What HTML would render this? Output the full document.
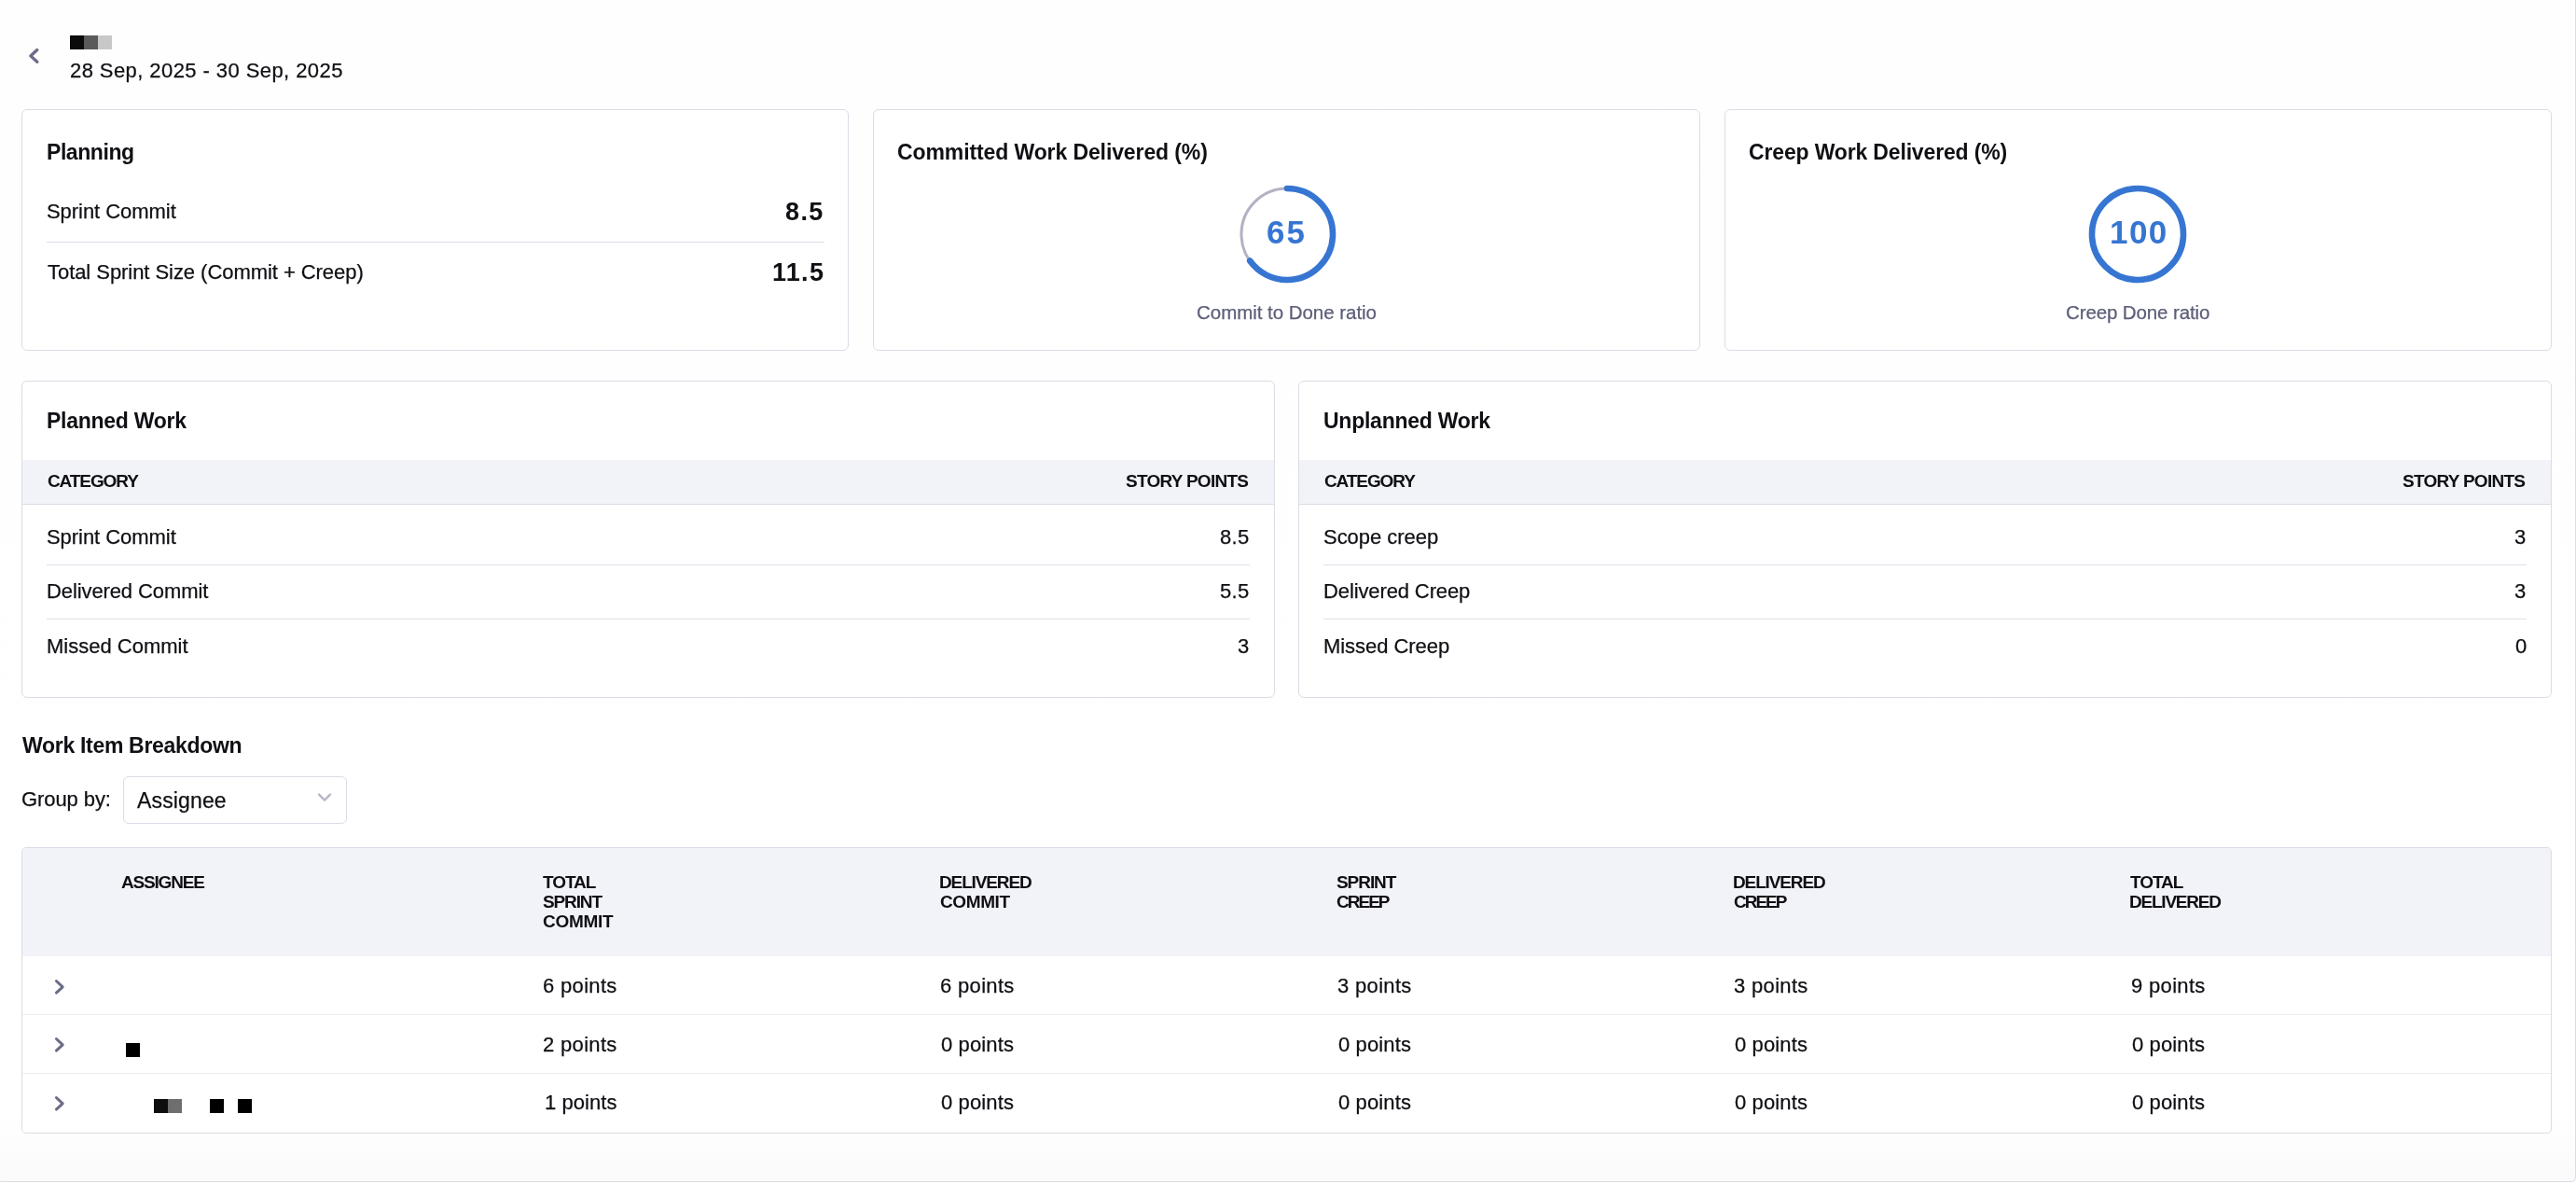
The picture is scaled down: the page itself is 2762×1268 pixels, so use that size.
<!DOCTYPE html>
<html><head><meta charset="utf-8"><title>Sprint Report</title>
<style>
html,body{margin:0;padding:0;width:2762px;height:1268px;overflow:hidden;background:#fefefe;}
body{position:relative;font-family:"Liberation Sans", sans-serif;}
.t{position:absolute;white-space:nowrap;will-change:transform;}
</style></head><body>
<div style="position:absolute;left:-3px;top:-10px;width:2765px;height:1277px;box-sizing:border-box;border-right:1px solid #dcdce6;border-bottom:1px solid #dcdce6;border-left:1px solid #dcdce6;border-bottom-left-radius:5px;border-bottom-right-radius:5px;background:linear-gradient(to bottom,#fefefe 0px,#ffffff 1205px,#fafafb 1277px)"></div>
<svg style="position:absolute;left:0;top:0" width="60" height="90"><path d="M39.8 53.6 L32.8 59.9 L39.8 66.3" fill="none" stroke="#6b6b88" stroke-width="3.3" stroke-linecap="round" stroke-linejoin="round"/></svg>
<div style="position:absolute;left:75px;top:38px;width:15px;height:15px;background:#0b0b0b"></div>
<div style="position:absolute;left:90px;top:38px;width:15px;height:15px;background:#5a5a5a"></div>
<div style="position:absolute;left:105px;top:38px;width:15px;height:15px;background:#c8c8c8"></div>
<div class="t" style="left:75.30px;top:58.88px;font-size:22.00px;line-height:33px;font-weight:400;color:#0f0f14;letter-spacing:0.426px;-webkit-text-stroke:0.25px #0f0f14">28 Sep, 2025 - 30 Sep, 2025</div>
<div style="position:absolute;left:23px;top:117px;width:887px;height:259px;box-sizing:border-box;border:1px solid #dcdce6;border-radius:6px;background:#fff"></div>
<div style="position:absolute;left:936px;top:117px;width:887px;height:259px;box-sizing:border-box;border:1px solid #dcdce6;border-radius:6px;background:#fff"></div>
<div style="position:absolute;left:1849px;top:117px;width:887px;height:259px;box-sizing:border-box;border:1px solid #dcdce6;border-radius:6px;background:#fff"></div>
<div class="t" style="left:50.36px;top:146.03px;font-size:23.00px;line-height:34px;font-weight:700;color:#0f0f14;letter-spacing:-0.429px">Planning</div>
<div class="t" style="left:50.36px;top:209.88px;font-size:22.00px;line-height:33px;font-weight:400;color:#0f0f14;letter-spacing:-0.051px;-webkit-text-stroke:0.25px #0f0f14">Sprint Commit</div>
<div class="t" style="left:842.42px;top:206.64px;font-size:27.00px;line-height:40px;font-weight:700;color:#0f0f14;letter-spacing:1.405px">8.5</div>
<div style="position:absolute;left:50px;top:259px;width:834px;height:1px;background:#dcdce8"></div>
<div class="t" style="left:51.06px;top:274.88px;font-size:22.00px;line-height:33px;font-weight:400;color:#0f0f14;letter-spacing:-0.054px;-webkit-text-stroke:0.25px #0f0f14">Total Sprint Size (Commit + Creep)</div>
<div class="t" style="left:827.86px;top:271.64px;font-size:27.00px;line-height:40px;font-weight:700;color:#0f0f14;letter-spacing:1.281px">11.5</div>
<div class="t" style="left:962.42px;top:146.03px;font-size:23.00px;line-height:34px;font-weight:700;color:#0f0f14;letter-spacing:-0.105px">Committed Work Delivered (%)</div>
<div class="t" style="left:1874.98px;top:146.03px;font-size:23.00px;line-height:34px;font-weight:700;color:#0f0f14;letter-spacing:-0.158px">Creep Work Delivered (%)</div>
<svg style="position:absolute;left:1320.3px;top:190.7px" width="120" height="120"><circle cx="60" cy="60" r="49.0" fill="none" stroke="#b2b2c2" stroke-width="3"/><circle cx="60" cy="60" r="49.0" fill="none" stroke="#3676d2" stroke-width="6.6" stroke-linecap="round" stroke-dasharray="200.12 307.88" transform="rotate(-90 60 60)"/></svg>
<svg style="position:absolute;left:2232px;top:190.8px" width="120" height="120"><circle cx="60" cy="60" r="49.0" fill="none" stroke="#3676d2" stroke-width="6.6"/></svg>
<div class="t" style="left:1358.48px;top:222.87px;font-size:35.00px;line-height:52px;font-weight:700;color:#3676d2;letter-spacing:1.920px">65</div>
<div class="t" style="left:2262.40px;top:222.87px;font-size:35.00px;line-height:52px;font-weight:700;color:#3676d2;letter-spacing:1.430px">100</div>
<div class="t" style="left:1282.86px;top:319.40px;font-size:20.50px;line-height:31px;font-weight:400;color:#5c5e78;letter-spacing:-0.038px;-webkit-text-stroke:0.25px #5c5e78">Commit to Done ratio</div>
<div class="t" style="left:2214.92px;top:319.40px;font-size:20.50px;line-height:31px;font-weight:400;color:#5c5e78;letter-spacing:-0.114px;-webkit-text-stroke:0.25px #5c5e78">Creep Done ratio</div>
<div style="position:absolute;left:23px;top:408px;width:1344px;height:340px;box-sizing:border-box;border:1px solid #dcdce6;border-radius:6px;background:#fff"></div>
<div style="position:absolute;left:1392px;top:408px;width:1344px;height:340px;box-sizing:border-box;border:1px solid #dcdce6;border-radius:6px;background:#fff"></div>
<div class="t" style="left:49.54px;top:434.03px;font-size:23.00px;line-height:34px;font-weight:700;color:#0f0f14;letter-spacing:-0.263px">Planned Work</div>
<div style="position:absolute;left:24px;top:493px;width:1342px;height:47px;background:#f2f3f8"></div>
<div style="position:absolute;left:24px;top:540px;width:1342px;height:1px;background:#dcdce6"></div>
<div class="t" style="left:50.94px;top:502.42px;font-size:19.00px;line-height:28px;font-weight:700;color:#0f0f14;letter-spacing:-1.106px">CATEGORY</div>
<div class="t" style="left:1207.06px;top:502.42px;font-size:19.00px;line-height:28px;font-weight:700;color:#0f0f14;letter-spacing:-0.739px">STORY POINTS</div>
<div class="t" style="left:50.36px;top:558.88px;font-size:22.00px;line-height:33px;font-weight:400;color:#0f0f14;letter-spacing:-0.051px;-webkit-text-stroke:0.25px #0f0f14">Sprint Commit</div>
<div class="t" style="left:1307.92px;top:558.88px;font-size:22.00px;line-height:33px;font-weight:400;color:#0f0f14;letter-spacing:0.380px;-webkit-text-stroke:0.25px #0f0f14">8.5</div>
<div class="t" style="left:50.36px;top:616.88px;font-size:22.00px;line-height:33px;font-weight:400;color:#0f0f14;letter-spacing:-0.103px;-webkit-text-stroke:0.25px #0f0f14">Delivered Commit</div>
<div class="t" style="left:1307.92px;top:616.88px;font-size:22.00px;line-height:33px;font-weight:400;color:#0f0f14;letter-spacing:0.380px;-webkit-text-stroke:0.25px #0f0f14">5.5</div>
<div class="t" style="left:50.36px;top:675.88px;font-size:22.00px;line-height:33px;font-weight:400;color:#0f0f14;letter-spacing:-0.005px;-webkit-text-stroke:0.25px #0f0f14">Missed Commit</div>
<div class="t" style="left:1327.30px;top:675.88px;font-size:22.00px;line-height:33px;font-weight:400;color:#0f0f14;letter-spacing:0.000px;-webkit-text-stroke:0.25px #0f0f14">3</div>
<div style="position:absolute;left:50px;top:605px;width:1290px;height:1px;background:#e0e0e9"></div>
<div style="position:absolute;left:50px;top:663px;width:1290px;height:1px;background:#e0e0e9"></div>
<div class="t" style="left:1418.54px;top:434.03px;font-size:23.00px;line-height:34px;font-weight:700;color:#0f0f14;letter-spacing:-0.246px">Unplanned Work</div>
<div style="position:absolute;left:1393px;top:493px;width:1342px;height:47px;background:#f2f3f8"></div>
<div style="position:absolute;left:1393px;top:540px;width:1342px;height:1px;background:#dcdce6"></div>
<div class="t" style="left:1419.94px;top:502.42px;font-size:19.00px;line-height:28px;font-weight:700;color:#0f0f14;letter-spacing:-1.106px">CATEGORY</div>
<div class="t" style="left:2576.06px;top:502.42px;font-size:19.00px;line-height:28px;font-weight:700;color:#0f0f14;letter-spacing:-0.739px">STORY POINTS</div>
<div class="t" style="left:1419.36px;top:558.88px;font-size:22.00px;line-height:33px;font-weight:400;color:#0f0f14;letter-spacing:-0.025px;-webkit-text-stroke:0.25px #0f0f14">Scope creep</div>
<div class="t" style="left:2695.98px;top:558.88px;font-size:22.00px;line-height:33px;font-weight:400;color:#0f0f14;letter-spacing:0.000px;-webkit-text-stroke:0.25px #0f0f14">3</div>
<div class="t" style="left:1419.36px;top:616.88px;font-size:22.00px;line-height:33px;font-weight:400;color:#0f0f14;letter-spacing:-0.117px;-webkit-text-stroke:0.25px #0f0f14">Delivered Creep</div>
<div class="t" style="left:2695.98px;top:616.88px;font-size:22.00px;line-height:33px;font-weight:400;color:#0f0f14;letter-spacing:0.000px;-webkit-text-stroke:0.25px #0f0f14">3</div>
<div class="t" style="left:1419.36px;top:675.88px;font-size:22.00px;line-height:33px;font-weight:400;color:#0f0f14;letter-spacing:-0.045px;-webkit-text-stroke:0.25px #0f0f14">Missed Creep</div>
<div class="t" style="left:2697.38px;top:675.88px;font-size:22.00px;line-height:33px;font-weight:400;color:#0f0f14;letter-spacing:0.000px;-webkit-text-stroke:0.25px #0f0f14">0</div>
<div style="position:absolute;left:1419px;top:605px;width:1290px;height:1px;background:#e0e0e9"></div>
<div style="position:absolute;left:1419px;top:663px;width:1290px;height:1px;background:#e0e0e9"></div>
<div class="t" style="left:24.12px;top:782.03px;font-size:23.00px;line-height:34px;font-weight:700;color:#0f0f14;letter-spacing:-0.305px">Work Item Breakdown</div>
<div class="t" style="left:23.42px;top:839.88px;font-size:22.00px;line-height:33px;font-weight:400;color:#0f0f14;letter-spacing:-0.078px;-webkit-text-stroke:0.25px #0f0f14">Group by:</div>
<div style="position:absolute;left:132px;top:832px;width:240px;height:51px;box-sizing:border-box;border:1px solid #dcdce6;border-radius:6px;background:#fff"></div>
<div class="t" style="left:146.50px;top:841.03px;font-size:23.00px;line-height:34px;font-weight:400;color:#0f0f14;letter-spacing:0.145px;-webkit-text-stroke:0.25px #0f0f14">Assignee</div>
<svg style="position:absolute;left:330px;top:840px" width="40" height="30"><path d="M12 11.6 L18 17.6 L24 11.6" fill="none" stroke="#b8b8c6" stroke-width="2.4" stroke-linecap="round" stroke-linejoin="round"/></svg>
<div style="position:absolute;left:23px;top:908px;width:2713px;height:307px;box-sizing:border-box;border:1px solid #dcdce6;border-radius:5px;background:#fff"></div>
<div style="position:absolute;left:24px;top:909px;width:2711px;height:116px;background:#f2f3f8;border-top-left-radius:4px;border-top-right-radius:4px"></div>
<div style="position:absolute;left:24px;top:1087px;width:2711px;height:1px;background:#ebebf1"></div>
<div style="position:absolute;left:24px;top:1150px;width:2711px;height:1px;background:#ebebf1"></div>
<div class="t" style="left:130.38px;top:931.82px;font-size:19.00px;line-height:28px;font-weight:700;color:#0f0f14;letter-spacing:-1.196px">ASSIGNEE</div>
<div class="t" style="left:582.06px;top:932.42px;font-size:19.00px;line-height:28px;font-weight:700;color:#0f0f14;letter-spacing:-1.045px">TOTAL</div>
<div class="t" style="left:582.06px;top:953.42px;font-size:19.00px;line-height:28px;font-weight:700;color:#0f0f14;letter-spacing:-1.123px">SPRINT</div>
<div class="t" style="left:582.06px;top:974.42px;font-size:19.00px;line-height:28px;font-weight:700;color:#0f0f14;letter-spacing:-0.297px">COMMIT</div>
<div class="t" style="left:1006.54px;top:932.42px;font-size:19.00px;line-height:28px;font-weight:700;color:#0f0f14;letter-spacing:-1.127px">DELIVERED</div>
<div class="t" style="left:1007.94px;top:953.42px;font-size:19.00px;line-height:28px;font-weight:700;color:#0f0f14;letter-spacing:-0.385px">COMMIT</div>
<div class="t" style="left:1433.44px;top:932.42px;font-size:19.00px;line-height:28px;font-weight:700;color:#0f0f14;letter-spacing:-1.059px">SPRINT</div>
<div class="t" style="left:1433.44px;top:953.42px;font-size:19.00px;line-height:28px;font-weight:700;color:#0f0f14;letter-spacing:-1.989px">CREEP</div>
<div class="t" style="left:1857.86px;top:932.42px;font-size:19.00px;line-height:28px;font-weight:700;color:#0f0f14;letter-spacing:-1.127px">DELIVERED</div>
<div class="t" style="left:1858.56px;top:953.42px;font-size:19.00px;line-height:28px;font-weight:700;color:#0f0f14;letter-spacing:-2.004px">CREEP</div>
<div class="t" style="left:2284.44px;top:932.42px;font-size:19.00px;line-height:28px;font-weight:700;color:#0f0f14;letter-spacing:-1.045px">TOTAL</div>
<div class="t" style="left:2283.04px;top:953.42px;font-size:19.00px;line-height:28px;font-weight:700;color:#0f0f14;letter-spacing:-1.222px">DELIVERED</div>
<div class="t" style="left:582.42px;top:1040.08px;font-size:22.00px;line-height:33px;font-weight:400;color:#0f0f14;letter-spacing:0.328px;-webkit-text-stroke:0.25px #0f0f14">6 points</div>
<div class="t" style="left:1008.30px;top:1040.08px;font-size:22.00px;line-height:33px;font-weight:400;color:#0f0f14;letter-spacing:0.328px;-webkit-text-stroke:0.25px #0f0f14">6 points</div>
<div class="t" style="left:1433.80px;top:1040.08px;font-size:22.00px;line-height:33px;font-weight:400;color:#0f0f14;letter-spacing:0.328px;-webkit-text-stroke:0.25px #0f0f14">3 points</div>
<div class="t" style="left:1858.92px;top:1040.08px;font-size:22.00px;line-height:33px;font-weight:400;color:#0f0f14;letter-spacing:0.328px;-webkit-text-stroke:0.25px #0f0f14">3 points</div>
<div class="t" style="left:2284.80px;top:1040.08px;font-size:22.00px;line-height:33px;font-weight:400;color:#0f0f14;letter-spacing:0.328px;-webkit-text-stroke:0.25px #0f0f14">9 points</div>
<svg style="position:absolute;left:50px;top:1046px" width="30" height="24"><path d="M10.4 5.5 L17.2 11.8 L10.4 18.1" fill="none" stroke="#6b6b88" stroke-width="3" stroke-linecap="round" stroke-linejoin="round"/></svg>
<div class="t" style="left:582.42px;top:1102.88px;font-size:22.00px;line-height:33px;font-weight:400;color:#0f0f14;letter-spacing:0.328px;-webkit-text-stroke:0.25px #0f0f14">2 points</div>
<div class="t" style="left:1009.00px;top:1102.88px;font-size:22.00px;line-height:33px;font-weight:400;color:#0f0f14;letter-spacing:0.128px;-webkit-text-stroke:0.25px #0f0f14">0 points</div>
<div class="t" style="left:1434.50px;top:1102.88px;font-size:22.00px;line-height:33px;font-weight:400;color:#0f0f14;letter-spacing:0.128px;-webkit-text-stroke:0.25px #0f0f14">0 points</div>
<div class="t" style="left:1859.62px;top:1102.88px;font-size:22.00px;line-height:33px;font-weight:400;color:#0f0f14;letter-spacing:0.128px;-webkit-text-stroke:0.25px #0f0f14">0 points</div>
<div class="t" style="left:2285.50px;top:1102.88px;font-size:22.00px;line-height:33px;font-weight:400;color:#0f0f14;letter-spacing:0.128px;-webkit-text-stroke:0.25px #0f0f14">0 points</div>
<svg style="position:absolute;left:50px;top:1108px" width="30" height="24"><path d="M10.4 5.5 L17.2 11.8 L10.4 18.1" fill="none" stroke="#6b6b88" stroke-width="3" stroke-linecap="round" stroke-linejoin="round"/></svg>
<div class="t" style="left:583.60px;top:1164.88px;font-size:22.00px;line-height:33px;font-weight:400;color:#0f0f14;letter-spacing:0.059px;-webkit-text-stroke:0.25px #0f0f14">1 points</div>
<div class="t" style="left:1009.00px;top:1164.88px;font-size:22.00px;line-height:33px;font-weight:400;color:#0f0f14;letter-spacing:0.128px;-webkit-text-stroke:0.25px #0f0f14">0 points</div>
<div class="t" style="left:1434.50px;top:1164.88px;font-size:22.00px;line-height:33px;font-weight:400;color:#0f0f14;letter-spacing:0.128px;-webkit-text-stroke:0.25px #0f0f14">0 points</div>
<div class="t" style="left:1859.62px;top:1164.88px;font-size:22.00px;line-height:33px;font-weight:400;color:#0f0f14;letter-spacing:0.128px;-webkit-text-stroke:0.25px #0f0f14">0 points</div>
<div class="t" style="left:2285.50px;top:1164.88px;font-size:22.00px;line-height:33px;font-weight:400;color:#0f0f14;letter-spacing:0.128px;-webkit-text-stroke:0.25px #0f0f14">0 points</div>
<svg style="position:absolute;left:50px;top:1171px" width="30" height="24"><path d="M10.4 5.5 L17.2 11.8 L10.4 18.1" fill="none" stroke="#6b6b88" stroke-width="3" stroke-linecap="round" stroke-linejoin="round"/></svg>
<div style="position:absolute;left:135px;top:1118px;width:15px;height:15px;background:#000"></div>
<div style="position:absolute;left:165px;top:1178px;width:15px;height:15px;background:#0e0e0e"></div>
<div style="position:absolute;left:180px;top:1178px;width:15px;height:15px;background:#6e6e6e"></div>
<div style="position:absolute;left:225px;top:1178px;width:15px;height:15px;background:#000"></div>
<div style="position:absolute;left:255px;top:1178px;width:15px;height:15px;background:#000"></div>
</body></html>
